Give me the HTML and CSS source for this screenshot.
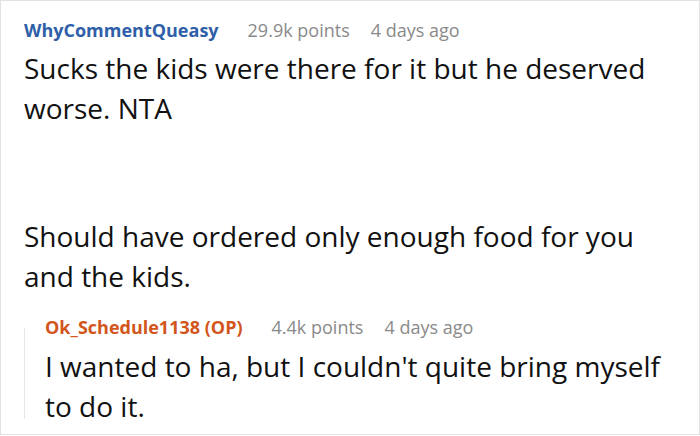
FILE: index.html
```html
<!DOCTYPE html>
<html>
<head>
<meta charset="utf-8">
<link rel="stylesheet" href="styles.css">
</head>
<body>
<div class="frame">
  <div class="comment">
    <div class="meta">
      <span class="user user-blue">WhyCommentQueasy</span>
      <span class="info">29.9k points</span>
      <span class="info">4 days ago</span>
    </div>
    <p class="body">Sucks the kids were there for it but he deserved worse. NTA</p>
  </div>
  <div class="comment second">
    <p class="body">Should have ordered only enough food for you and the kids.</p>
    <div class="reply">
      <div class="meta">
        <span class="user user-orange">Ok_Schedule1138 (OP)</span>
        <span class="info">4.4k points</span>
        <span class="info">4 days ago</span>
      </div>
      <p class="body">I wanted to ha, but I couldn't quite bring myself to do it.</p>
    </div>
  </div>
</div>
</body>
</html>
```
FILE: styles.css
```css
html, body {
  margin: 0;
  padding: 0;
  background: #ffffff;
}
.frame {
  width: 700px;
  height: 435px;
  box-sizing: border-box;
  border: 1px solid #e2e2e2;
  padding: 17px 0 0 23px;
  font-family: "Open Sans", "Noto Sans", sans-serif;
  color: #111111;
  overflow: hidden;
}
.meta {
  font-size: 18px;
  line-height: 24px;
  display: flex;
  gap: 21px;
  white-space: nowrap;
}
.user {
  font-weight: 700;
  margin-right: 8px;
}
.user-blue { color: #2f5fa8; }
.user-orange { color: #d2561c; }
.info { color: #8a8a8a; }
.body {
  margin: 6px 0 0 0;
  font-size: 28px;
  line-height: 40px;
  width: 640px;
}
.second {
  margin-top: 88px;
}
.second > .body {
  margin-top: 0;
}
.reply {
  position: relative;
  margin-top: 19px;
  padding-left: 21px;
}
.reply::before {
  content: "";
  position: absolute;
  left: 0;
  top: 13px;
  bottom: 7px;
  width: 1px;
  background: #e6e6e6;
}
.reply .body {
  margin-top: 7px;
  width: 625px;
}
```
